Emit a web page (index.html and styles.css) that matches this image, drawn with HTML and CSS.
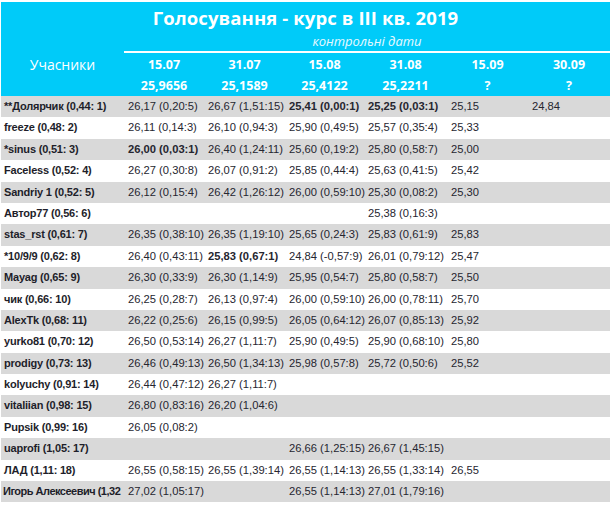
FILE: index.html
```html
<!DOCTYPE html>
<html lang="uk">
<head>
<meta charset="utf-8">
<title>Голосування - курс в III кв. 2019</title>
<link rel="stylesheet" href="styles.css">
</head>
<body>
<div class="page">
  <div class="head">
    <div class="title">Голосування - курс в III кв. 2019</div>
    <div class="hrow sub">
      <div class="blank"></div>
      <div class="subtitle">контрольні дати</div>
    </div>
    <div class="hrow dates">
      <div class="label">Учасники</div>
      <div>15.07</div><div>31.07</div><div>15.08</div><div>31.08</div><div>15.09</div><div>30.09</div>
    </div>
    <div class="hrow vals">
      <div></div>
      <div>25,9656</div><div>25,1589</div><div>25,4122</div><div>25,2211</div><div>?</div><div>?</div>
    </div>
  </div>
  <div class="body">
    <div class="row"><div class="name">**Долярчик (0,44: 1)</div><div>26,17 (0,20:5)</div><div>26,67 (1,51:15)</div><div class="b">25,41 (0,00:1)</div><div class="b">25,25 (0,03:1)</div><div>25,15</div><div>24,84</div></div>
    <div class="row"><div class="name">freeze (0,48: 2)</div><div>26,11 (0,14:3)</div><div>26,10 (0,94:3)</div><div>25,90 (0,49:5)</div><div>25,57 (0,35:4)</div><div>25,33</div><div></div></div>
    <div class="row"><div class="name">*sinus (0,51: 3)</div><div class="b">26,00 (0,03:1)</div><div>26,40 (1,24:11)</div><div>25,60 (0,19:2)</div><div>25,80 (0,58:7)</div><div>25,00</div><div></div></div>
    <div class="row"><div class="name">Faceless (0,52: 4)</div><div>26,27 (0,30:8)</div><div>26,07 (0,91:2)</div><div>25,85 (0,44:4)</div><div>25,63 (0,41:5)</div><div>25,42</div><div></div></div>
    <div class="row"><div class="name">Sandriy 1 (0,52: 5)</div><div>26,12 (0,15:4)</div><div>26,42 (1,26:12)</div><div>26,00 (0,59:10)</div><div>25,30 (0,08:2)</div><div>25,30</div><div></div></div>
    <div class="row"><div class="name">Автор77 (0,56: 6)</div><div></div><div></div><div></div><div>25,38 (0,16:3)</div><div></div><div></div></div>
    <div class="row"><div class="name">stas_rst (0,61: 7)</div><div>26,35 (0,38:10)</div><div>26,35 (1,19:10)</div><div>25,65 (0,24:3)</div><div>25,83 (0,61:9)</div><div>25,83</div><div></div></div>
    <div class="row"><div class="name">*10/9/9 (0,62: 8)</div><div>26,40 (0,43:11)</div><div class="b">25,83 (0,67:1)</div><div>24,84 (-0,57:9)</div><div>26,01 (0,79:12)</div><div>25,47</div><div></div></div>
    <div class="row"><div class="name">Mayag (0,65: 9)</div><div>26,30 (0,33:9)</div><div>26,30 (1,14:9)</div><div>25,95 (0,54:7)</div><div>25,80 (0,58:7)</div><div>25,50</div><div></div></div>
    <div class="row"><div class="name">чик (0,66: 10)</div><div>26,25 (0,28:7)</div><div>26,13 (0,97:4)</div><div>26,00 (0,59:10)</div><div>26,00 (0,78:11)</div><div>25,70</div><div></div></div>
    <div class="row"><div class="name">AlexTk (0,68: 11)</div><div>26,22 (0,25:6)</div><div>26,15 (0,99:5)</div><div>26,05 (0,64:12)</div><div>26,07 (0,85:13)</div><div>25,92</div><div></div></div>
    <div class="row"><div class="name">yurko81 (0,70: 12)</div><div>26,50 (0,53:14)</div><div>26,27 (1,11:7)</div><div>25,90 (0,49:5)</div><div>25,90 (0,68:10)</div><div>25,80</div><div></div></div>
    <div class="row"><div class="name">prodigy (0,73: 13)</div><div>26,46 (0,49:13)</div><div>26,50 (1,34:13)</div><div>25,98 (0,57:8)</div><div>25,72 (0,50:6)</div><div>25,52</div><div></div></div>
    <div class="row"><div class="name">kolyuchy (0,91: 14)</div><div>26,44 (0,47:12)</div><div>26,27 (1,11:7)</div><div></div><div></div><div></div><div></div></div>
    <div class="row"><div class="name">vitaliian (0,98: 15)</div><div>26,80 (0,83:16)</div><div>26,20 (1,04:6)</div><div></div><div></div><div></div><div></div></div>
    <div class="row"><div class="name">Pupsik (0,99: 16)</div><div>26,05 (0,08:2)</div><div></div><div></div><div></div><div></div><div></div></div>
    <div class="row"><div class="name">uaprofi (1,05: 17)</div><div></div><div></div><div>26,66 (1,25:15)</div><div>26,67 (1,45:15)</div><div></div><div></div></div>
    <div class="row"><div class="name">ЛАД (1,11: 18)</div><div>26,55 (0,58:15)</div><div>26,55 (1,39:14)</div><div>26,55 (1,14:13)</div><div>26,55 (1,33:14)</div><div>26,55</div><div></div></div>
    <div class="row"><div class="name long">Игорь Алексеевич (1,32</div><div>27,02 (1,05:17)</div><div></div><div>26,55 (1,14:13)</div><div>27,01 (1,79:16)</div><div></div><div></div></div>
  </div>
</div>
</body>
</html>
```
FILE: styles.css
```css
* { box-sizing: border-box; }
html, body { margin: 0; padding: 0; background: #ffffff; }
body { width: 610px; height: 505px; overflow: hidden; }

.page {
  padding: 2px 0 0 1px;
}

.head {
  background: #00cbf9;
  color: #ffffff;
  font-family: "Open Sans", "DejaVu Sans", sans-serif;
}

.title {
  height: 30px;
  line-height: 32px;
  text-align: center;
  font-weight: 700;
  font-size: 18.5px;
  letter-spacing: 0.1px;
}

.hrow {
  display: grid;
  grid-template-columns: 123px 80px 81px 79px 83px 81px 1fr;
}

.sub { height: 21px; }
.sub .subtitle {
  grid-column: 2 / 8;
  text-align: center;
  font-style: italic;
  font-size: 13px;
  line-height: 19px;
  color: #e8f9ff;
  border-bottom: 2px solid #ffffff;
}

.dates { height: 23px; }
.dates > div {
  text-align: center;
  font-weight: 700;
  font-size: 12.5px;
  line-height: 23px;
}
.dates .label {
  font-weight: 400;
  font-size: 14px;
}

.vals { height: 20px; }
.vals > div {
  text-align: center;
  font-weight: 700;
  font-size: 12.5px;
  line-height: 20px;
}

.body {
  font-family: "Liberation Sans", Arial, sans-serif;
  font-size: 11.2px;
  color: #262630;
}

.row {
  display: grid;
  grid-template-columns: 123px 80px 81px 79px 83px 81px 1fr;
  height: 21.4px;
  line-height: 21.4px;
}
.row:nth-child(odd) { background: #d9d9d9; }

.row > div {
  padding-left: 4px;
  white-space: nowrap;
}
.row > .name {
  padding-left: 3px;
  font-size: 11px;
  font-weight: 700;
  letter-spacing: -0.2px;
  overflow: hidden;
  color: #1e1e2a;
}
.row > .name.long {
  letter-spacing: -0.5px;
  padding-left: 2px;
}
.row > .b { font-weight: 700; }
```
